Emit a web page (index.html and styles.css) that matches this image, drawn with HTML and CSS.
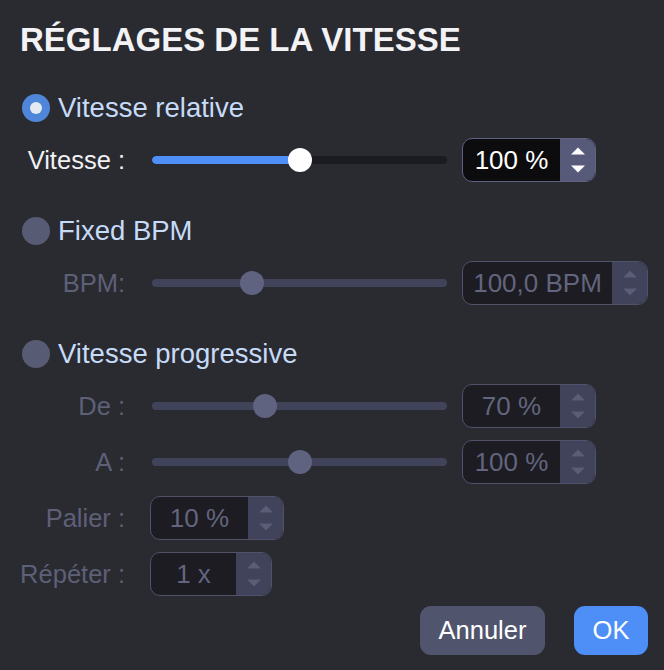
FILE: index.html
```html
<!DOCTYPE html>
<html lang="fr">
<head>
<meta charset="utf-8">
<title>Réglages de la vitesse</title>
<link rel="stylesheet" href="styles.css">
</head>
<body>
<div class="dialog">
  <h1 class="title">RÉGLAGES DE LA VITESSE</h1>

  <div class="radio-row first">
    <span class="radio on"><span class="dot"></span></span>
    <span class="radio-label">Vitesse relative</span>
  </div>
  <div class="row r-first">
    <span class="label on">Vitesse :</span>
    <div class="slider on">
      <div class="track"><div class="fill" style="width:148px"></div></div>
      <div class="knob" style="left:136px"></div>
    </div>
    <div class="spin on w134">
      <div class="spin-val">100 %</div>
      <div class="stepper">
        <svg width="16" height="8" viewBox="0 0 16 8"><path d="M8 0.5 L15 7.5 L1 7.5 Z"/></svg>
        <svg width="16" height="8" viewBox="0 0 16 8"><path d="M1 0.5 L15 0.5 L8 7.5 Z"/></svg>
      </div>
    </div>
  </div>

  <div class="radio-row second">
    <span class="radio"></span>
    <span class="radio-label">Fixed BPM</span>
  </div>
  <div class="row r-first">
    <span class="label">BPM:</span>
    <div class="slider">
      <div class="track"></div>
      <div class="knob" style="left:88px"></div>
    </div>
    <div class="spin w186">
      <div class="spin-val">100,0 BPM</div>
      <div class="stepper">
        <svg width="16" height="8" viewBox="0 0 16 8"><path d="M8 0.5 L15 7.5 L1 7.5 Z"/></svg>
        <svg width="16" height="8" viewBox="0 0 16 8"><path d="M1 0.5 L15 0.5 L8 7.5 Z"/></svg>
      </div>
    </div>
  </div>

  <div class="radio-row second">
    <span class="radio"></span>
    <span class="radio-label">Vitesse progressive</span>
  </div>
  <div class="row r-first">
    <span class="label">De :</span>
    <div class="slider">
      <div class="track"></div>
      <div class="knob" style="left:101px"></div>
    </div>
    <div class="spin w134">
      <div class="spin-val">70 %</div>
      <div class="stepper">
        <svg width="16" height="8" viewBox="0 0 16 8"><path d="M8 0.5 L15 7.5 L1 7.5 Z"/></svg>
        <svg width="16" height="8" viewBox="0 0 16 8"><path d="M1 0.5 L15 0.5 L8 7.5 Z"/></svg>
      </div>
    </div>
  </div>
  <div class="row">
    <span class="label">A :</span>
    <div class="slider">
      <div class="track"></div>
      <div class="knob" style="left:136px"></div>
    </div>
    <div class="spin w134">
      <div class="spin-val">100 %</div>
      <div class="stepper">
        <svg width="16" height="8" viewBox="0 0 16 8"><path d="M8 0.5 L15 7.5 L1 7.5 Z"/></svg>
        <svg width="16" height="8" viewBox="0 0 16 8"><path d="M1 0.5 L15 0.5 L8 7.5 Z"/></svg>
      </div>
    </div>
  </div>
  <div class="row">
    <span class="label">Palier :</span>
    <div class="spin near w134">
      <div class="spin-val">10 %</div>
      <div class="stepper">
        <svg width="16" height="8" viewBox="0 0 16 8"><path d="M8 0.5 L15 7.5 L1 7.5 Z"/></svg>
        <svg width="16" height="8" viewBox="0 0 16 8"><path d="M1 0.5 L15 0.5 L8 7.5 Z"/></svg>
      </div>
    </div>
  </div>
  <div class="row">
    <span class="label">Répéter :</span>
    <div class="spin near w122">
      <div class="spin-val">1 x</div>
      <div class="stepper">
        <svg width="16" height="8" viewBox="0 0 16 8"><path d="M8 0.5 L15 7.5 L1 7.5 Z"/></svg>
        <svg width="16" height="8" viewBox="0 0 16 8"><path d="M1 0.5 L15 0.5 L8 7.5 Z"/></svg>
      </div>
    </div>
  </div>

  <div class="buttons">
    <button class="btn cancel">Annuler</button>
    <button class="btn ok">OK</button>
  </div>
</div>
</body>
</html>
```

FILE: styles.css
```css
html, body {
  margin: 0;
  padding: 0;
  background: #2a2a31;
}
body {
  font-family: "Liberation Sans", Arial, Helvetica, sans-serif;
  width: 664px;
  height: 670px;
  overflow: hidden;
}
.dialog {
  padding: 20px 16px 0 20px;
}
.title {
  margin: 0;
  height: 40px;
  line-height: 40px;
  font-size: 33px;
  font-weight: bold;
  color: #f3f3f6;
  letter-spacing: 0;
  white-space: nowrap;
}
.radio-row {
  display: flex;
  align-items: center;
  height: 40px;
  padding-left: 2px;
}
.radio-row.first { margin-top: 28px; }
.radio-row.second { margin-top: 29px; }
.radio {
  width: 28px;
  height: 28px;
  border-radius: 50%;
  background: #585b74;
  display: flex;
  align-items: center;
  justify-content: center;
  flex: none;
}
.radio.on {
  background: #4f86da;
}
.radio .dot {
  width: 12px;
  height: 12px;
  border-radius: 50%;
  background: #e4e9f2;
}
.radio-label {
  margin-left: 8px;
  font-size: 27.5px;
  color: #c6dbf8;
  white-space: nowrap;
}
.row {
  display: flex;
  align-items: center;
  height: 44px;
  margin-top: 12px;
}
.row.r-first { margin-top: 10px; }
.label {
  width: 105px;
  flex: none;
  text-align: right;
  font-size: 25.5px;
  color: #5d6077;
  white-space: nowrap;
}
.label.on { color: #f1f1f3; }
.slider {
  position: relative;
  margin-left: 27px;
  width: 295px;
  height: 24px;
  flex: none;
  display: flex;
  align-items: center;
}
.track {
  width: 100%;
  height: 8px;
  border-radius: 4px;
  background: #41435a;
  overflow: hidden;
}
.slider.on .track { background: #1b1b21; }
.fill {
  height: 100%;
  background: #4f8ff7;
  border-radius: 4px;
}
.knob {
  position: absolute;
  top: 0;
  width: 24px;
  height: 24px;
  border-radius: 50%;
  background: #606380;
}
.slider.on .knob { background: #ffffff; }
.spin {
  margin-left: 15px;
  height: 44px;
  box-sizing: border-box;
  border: 1.5px solid #4f5269;
  border-radius: 10px;
  display: flex;
  overflow: hidden;
  flex: none;
  background: #1c1c22;
}
.spin.near { margin-left: 25px; }
.spin.w134 { width: 134px; }
.spin.w186 { width: 186px; }
.spin.w122 { width: 122px; }
.spin.on {
  border-color: #5e6180;
  background: #0c0c0e;
}
.spin-val {
  flex: 1;
  display: flex;
  align-items: center;
  justify-content: center;
  font-size: 26px;
  color: #62657d;
  white-space: nowrap;
}
.spin.on .spin-val { color: #ffffff; }
.stepper {
  width: 35px;
  flex: none;
  background: #41435a;
  display: flex;
  flex-direction: column;
  align-items: center;
  justify-content: center;
  gap: 10px;
}
.stepper svg { display: block; }
.stepper path { fill: #5a5d77; }
.spin.on .stepper { background: #575a79; }
.spin.on .stepper path { fill: #ffffff; }
.buttons {
  display: flex;
  justify-content: flex-end;
  gap: 29px;
  margin-top: 10px;
}
.btn {
  height: 49px;
  border: none;
  border-radius: 11px;
  font-family: "Liberation Sans", Arial, Helvetica, sans-serif;
  font-size: 25.5px;
  color: #ffffff;
  padding: 0;
}
.btn.cancel {
  width: 125px;
  background: #50546c;
}
.btn.ok {
  width: 74px;
  background: #4d8ef7;
}
```
